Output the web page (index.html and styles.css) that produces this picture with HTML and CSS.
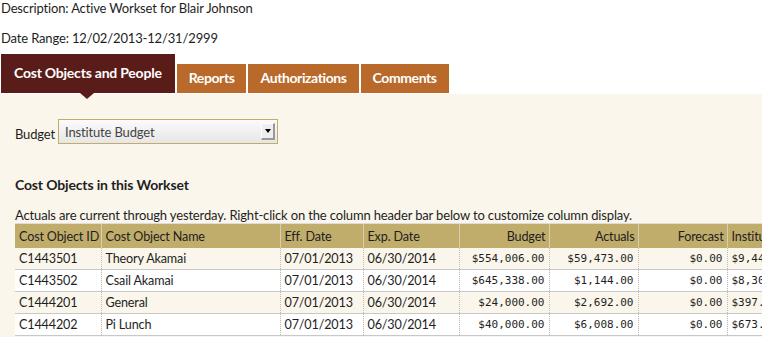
FILE: index.html
```html
<!DOCTYPE html>
<html>
<head>
<meta charset="utf-8">
<link rel="stylesheet" href="styles.css">
</head>
<body>
<div class="meta">
  <p>Description: Active Workset for Blair Johnson</p>
  <p>Date Range: 12/02/2013-12/31/2999</p>
</div>
<nav class="tabs">
  <a class="tab active">Cost Objects and People</a>
  <a class="tab">Reports</a>
  <a class="tab">Authorizations</a>
  <a class="tab">Comments</a>
</nav>
<section class="panel">
  <div class="budget-row">
    <span class="label">Budget</span>
    <div class="select"><span>Institute Budget</span><span class="btn"><span class="tri"></span></span></div>
  </div>
  <h2>Cost Objects in this Workset</h2>
  <p class="note">Actuals are current through yesterday. Right-click on the column header bar below to customize column display.</p>
  <table class="grid">
    <colgroup>
      <col class="c1"><col class="c2"><col class="c3"><col class="c4"><col class="c5"><col class="c6"><col class="c7"><col class="c8">
    </colgroup>
    <thead>
      <tr><th>Cost Object ID</th><th>Cost Object Name</th><th>Eff. Date</th><th>Exp. Date</th><th class="num">Budget</th><th class="num">Actuals</th><th class="num">Forecast</th><th>Institute Budget</th></tr>
    </thead>
    <tbody>
      <tr><td>C1443501</td><td>Theory Akamai</td><td>07/01/2013</td><td>06/30/2014</td><td class="num mono">$554,006.00</td><td class="num mono">$59,473.00</td><td class="num mono">$0.00</td><td class="mono">$9,443.00</td></tr>
      <tr><td>C1443502</td><td>Csail Akamai</td><td>07/01/2013</td><td>06/30/2014</td><td class="num mono">$645,338.00</td><td class="num mono">$1,144.00</td><td class="num mono">$0.00</td><td class="mono">$8,302.00</td></tr>
      <tr><td>C1444201</td><td>General</td><td>07/01/2013</td><td>06/30/2014</td><td class="num mono">$24,000.00</td><td class="num mono">$2,692.00</td><td class="num mono">$0.00</td><td class="mono ind">$397.00</td></tr>
      <tr><td>C1444202</td><td>Pi Lunch</td><td>07/01/2013</td><td>06/30/2014</td><td class="num mono">$40,000.00</td><td class="num mono">$6,008.00</td><td class="num mono">$0.00</td><td class="mono ind">$673.00</td></tr>
    </tbody>
  </table>
</section>
</body>
</html>
```
FILE: styles.css
```css
html, body {
  margin: 0;
  padding: 0;
  background: #fff;
  overflow: hidden;
}
body {
  font-family: Lato, "Noto Sans", sans-serif;
  font-size: 13px;
  letter-spacing: -0.15px;
  color: #1e1e1e;
  width: 762px;
  height: 337px;
}
.meta {
  padding: 0 0 0 1px;
}
.meta p {
  margin: 0;
  line-height: 16px;
}
.meta p + p {
  margin-top: 14px;
}
.tabs {
  display: flex;
  align-items: flex-end;
  gap: 2px;
  margin-top: 8px;
  padding-left: 1px;
  height: 39px;
}
.tab {
  display: block;
  color: #fff;
  font-weight: 700;
  font-size: 14px;
  letter-spacing: -0.4px;
  background: #b96a2b;
  height: 29px;
  line-height: 28px;
  padding: 0 12px;
  box-sizing: border-box;
}
.tab.active {
  background: #5a1c18;
  height: 39px;
  line-height: 38px;
  padding: 0 13px;
  letter-spacing: -0.22px;
  position: relative;
}
.tab.active::after {
  content: "";
  position: absolute;
  left: 79px;
  top: 39px;
  border-left: 7px solid transparent;
  border-right: 7px solid transparent;
  border-top: 6px solid #5a1c18;
}
.panel {
  margin-top: 1px;
  background: #faf6eb;
  padding: 25px 0 0 15px;
  height: 300px;
  box-sizing: border-box;
}
.budget-row {
  display: flex;
  align-items: center;
  gap: 3px;
}
.label {
  padding-top: 4px;
}
.select {
  width: 220px;
  height: 25px;
  box-sizing: border-box;
  border: 1px solid #c2ac68;
  background: linear-gradient(#fbfbfb, #e6e6e6);
  display: flex;
  align-items: center;
  justify-content: space-between;
  padding: 0 2px 0 6px;
  color: #444;
}
.btn {
  width: 14px;
  height: 17px;
  box-sizing: border-box;
  background: #eee;
  border-top: 1px solid #fff;
  border-left: 1px solid #fff;
  border-right: 2px solid #999;
  border-bottom: 2px solid #999;
  display: flex;
  align-items: center;
  justify-content: center;
}
.tri {
  border-left: 3px solid transparent;
  border-right: 3px solid transparent;
  border-top: 4px solid #000;
}
h2 {
  font-size: 14px;
  font-weight: 700;
  margin: 32px 0 0;
  line-height: 18px;
}
.note {
  margin: 14px 0 0;
  line-height: 15px;
}
.grid {
  border-collapse: collapse;
  table-layout: fixed;
  width: 820px;
  font-size: 12.6px;
}
.c1 { width: 86px; }
.c2 { width: 179px; }
.c3 { width: 83px; }
.c4 { width: 96px; }
.c5 { width: 90px; }
.c6 { width: 89px; }
.c7 { width: 89px; }
.c8 { width: 108px; }
.grid th {
  background: #c1ad6b;
  font-weight: 400;
  text-align: left;
  height: 24px;
  padding: 0 3px 0 4px;
  border-left: 1px solid #d8cfae;
  border-top: 1px solid #ddd;
  white-space: nowrap;
  overflow: hidden;
}
.grid th:first-child { border-left: 0; }
.grid td {
  height: 21px;
  padding: 0 4px;
  border-bottom: 1px solid #c8c8c8;
  border-left: 1px dotted #bbb;
  white-space: nowrap;
  overflow: hidden;
}
.grid td:first-child { border-left: 0; }
.grid tbody tr:nth-child(odd) td { background: #faf6eb; }
.grid tbody tr:nth-child(even) td { background: #fff; }
.grid .num { text-align: right; }
.mono {
  font-family: "DejaVu Sans Mono", monospace;
  font-size: 11px;
  letter-spacing: 0;
}
.ind { padding-left: 8px; }
```
